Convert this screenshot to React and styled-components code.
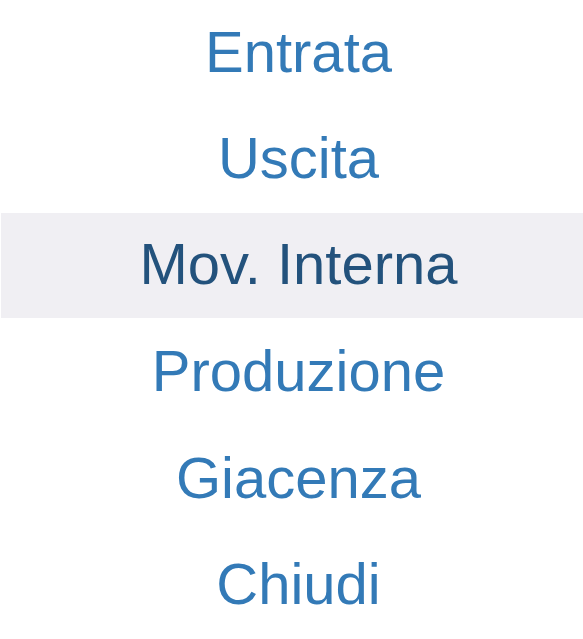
import React from "react";
import styled, { createGlobalStyle } from "styled-components";

const Global = createGlobalStyle`
  html, body { margin: 0; padding: 0; background: #ffffff; }
  body { font-family: "Liberation Sans", Arial, sans-serif; }
`;

const Menu = styled.nav`
  display: grid;
  grid-template-rows: repeat(6, 106.5px);
  width: 583px;
  height: 639px;
  overflow: hidden;
`;

const Item = styled.a`
  display: flex;
  align-items: center;
  justify-content: center;
  margin: ${(p) => (p.$active ? "0 0 2px 1px" : "0")};
  padding: ${(p) => (p.$active ? "0 0 3px 13px" : "0 0 3px 14px")};
  background: ${(p) => (p.$active ? "#f0eff3" : "transparent")};
  color: ${(p) => (p.$active ? "#23527c" : "#337ab7")};
  font-family: "Liberation Sans", Arial, sans-serif;
  font-size: 58px;
  line-height: 1;
  text-decoration: none;
  cursor: pointer;
`;

const items = ["Entrata", "Uscita", "Mov. Interna", "Produzione", "Giacenza", "Chiudi"];

export default function App() {
  return (
    <>
      <Global />
      <Menu>
        {items.map((t, i) => (
          <Item key={t} $active={i === 2}>
            {t}
          </Item>
        ))}
      </Menu>
    </>
  );
}
